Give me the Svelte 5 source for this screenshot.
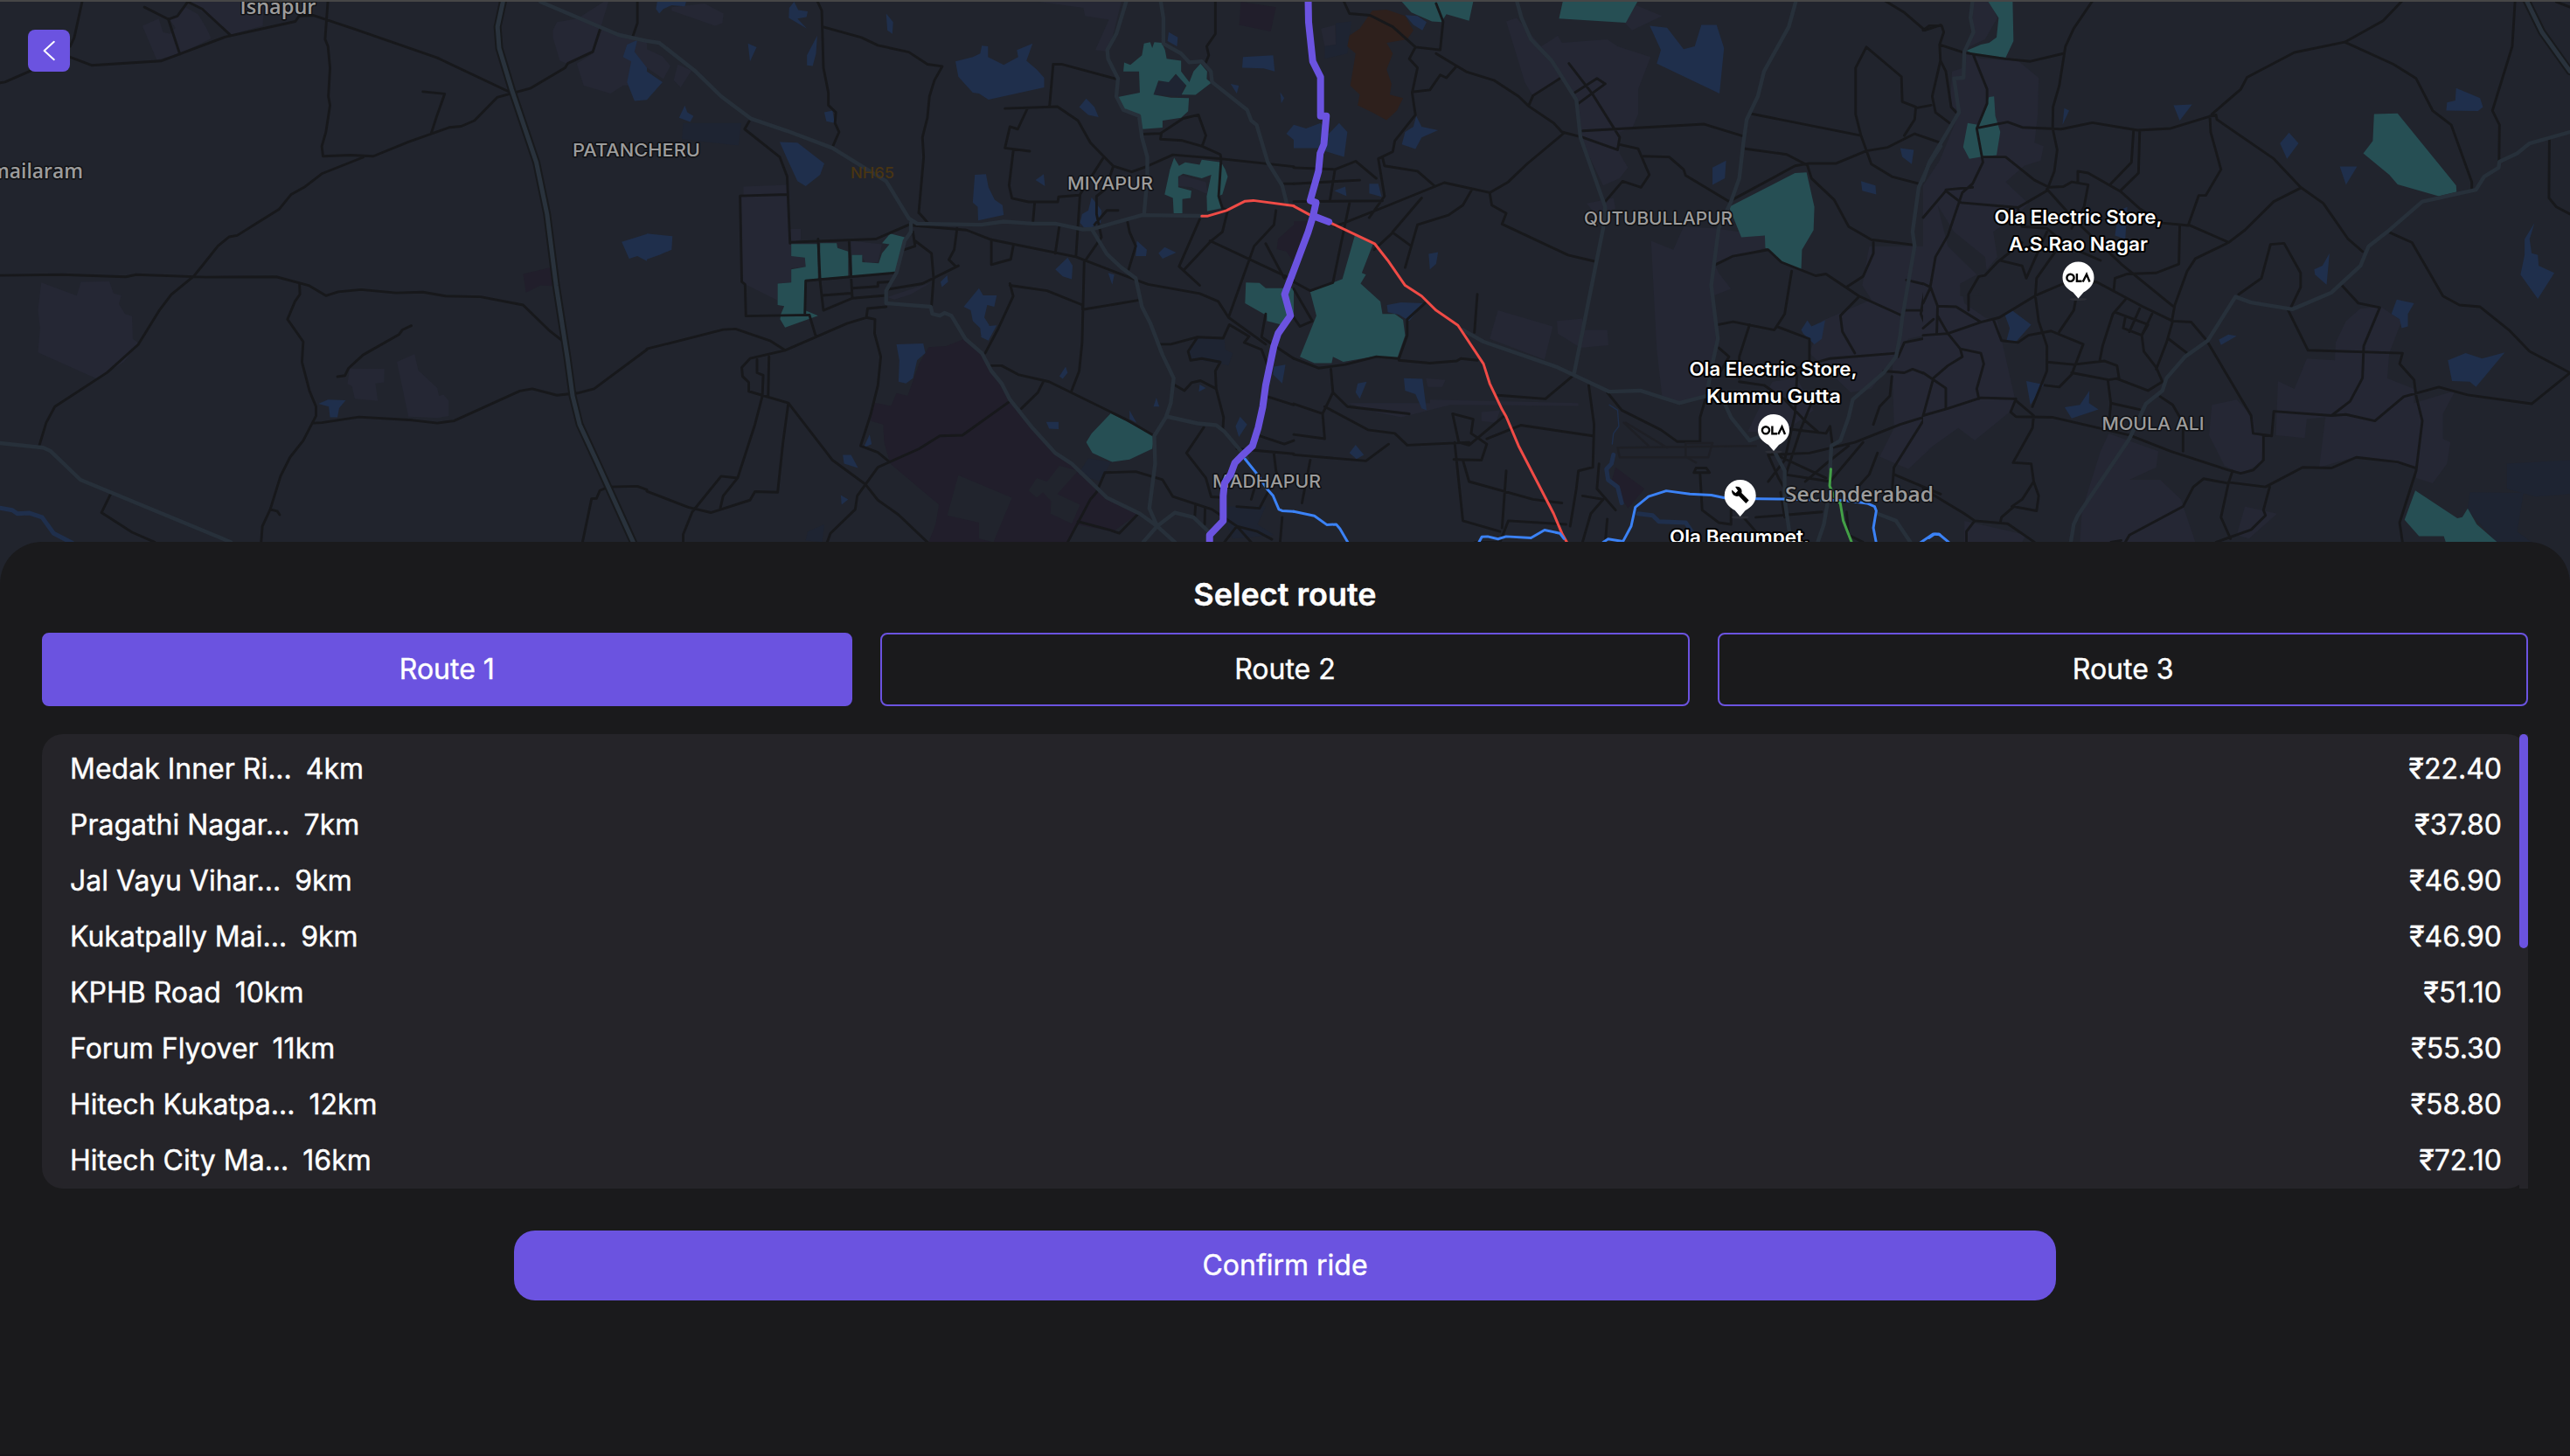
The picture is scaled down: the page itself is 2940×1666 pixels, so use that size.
<script>
  // Map geometry is stored in four tiles; every tile uses a 1568-unit square grid.
  const tiles = [
    {
      x: 0,
      shapes: [
        ['built', 'M345,72 385,52 395,90 412,95 425,78 412,55 450,20 480,40 500,78 512,108 437,150 380,168Z M455,0 640,0 637,72 560,97Z M1340,85 1350,62 1400,52 1470,0 1475,5 1455,80 1437,145 1378,180 1357,170 1340,105Z M1398,178 1437,150 1460,80 1568,110 1568,235 1510,240 1480,262 1415,240Z M100,792 186,829 196,790 265,789 275,822 294,828 288,852 303,880 320,886 322,950 336,962 300,1015 235,1062 92,988 97,920 92,870Z M848,1033 932,1034 931,1072 910,1075 916,1124 860,1118 853,1082 842,1076Z M962,1014 1005,992 1014,1038 1060,1088 1064,1110 1075,1106 1088,1124 1088,1166 1060,1172 990,1168Z'],
        ['campus', 'M1268,768 1335,750 1340,802 1310,800 1275,820Z'],
        ['water', 'M1520,125 1545,112 1538,145 1568,190 1568,280 1538,283 1520,230 1530,172 1510,160Z M1507,678 1568,656 1568,732 1545,718 1525,725Z M772,1132 795,1120 838,1122 822,1144 818,1170 800,1170 797,1140Z']
      ],
      roads: 'M200,0 180,105 170,130 M170,160 222,183 390,171 545,104 716,60 725,45 760,43 860,82 1060,162 1235,258 M0,232 12,230 75,198 M350,20 408,54 430,45 455,5 490,25 560,100 M408,54 436,152 M795,0 788,110 795,130 800,190 796,270 800,295 790,370 780,410 783,438 850,435 905,438 990,398 1090,357 1118,354 1150,338 1205,273 1285,248 1370,190 1376,178 1437,145 1455,80 M1025,257 1078,263 1058,328 1045,375 M880,441 780,487 740,523 705,546 677,586 575,660 555,664 528,690 495,738 470,774 415,826 385,872 335,966 260,1044 133,1140 112,1185 95,1250 M0,772 150,770 305,776 330,770 500,777 670,776 748,800 790,829 820,818 875,812 960,821 1025,819 1080,830 1165,832 1268,855 1330,925 1365,957 1378,978 M726,795 727,825 715,845 697,895 735,958 732,1015 750,1095 766,1140 766,1166 735,1235 703,1282 680,1335 655,1428 636,1475 633,1520 M655,1428 672,1433 678,1443 M818,1056 836,1053 845,1032 880,995 967,938 975,925 997,913 M1568,980 1440,1090 1400,1102 1350,1108 1290,1090 1260,1096 1100,1180 1060,1186 1000,1178 870,1169 780,1185 760,1186 M268,1385 246,1437 320,1492 375,1520 M1568,1373 1545,1363 1475,1365 1454,1375 1446,1397 1434,1398 1412,1520 M1545,0 1545,65 1533,105',
      highways: 'M0,1242 105,1255 122,1264 195,1345 560,1520 M1310,5 1500,98 1568,115',
      expressway: 'M1220,0 1206,75 1210,135 1240,250 1300,455 1326,600 1348,800 1375,1000 1388,1110 1405,1190 1445,1290 1535,1520',
      rivers: 'M0,1424 30,1430 42,1440 70,1438 102,1450 130,1495 175,1522'
    },
    {
      x: 740,
      shapes: [
        ['built', 'M60,20 140,10 186,38 183,65 165,72 60,30Z M0,138 38,158 57,185 40,222 0,190Z M75,180 108,198 82,245 65,225Z M234,523 340,518 342,545 234,548Z M228,548 342,545 347,642 373,642 373,672 347,682 385,720 385,748 350,752 350,792 317,795 317,842 232,793Z M950,5 1150,5 1120,145 1087,140 1120,55 1062,45 1058,22Z M1290,490 1355,510 1360,545 1320,525 1288,522Z M582,833 690,792 640,825 600,840Z M495,675 570,685 560,735 530,738 520,715 495,715Z'],
        ['campus', 'M683,973 725,970 770,950 812,990 835,1040 880,1125 905,1160 988,1270 1030,1300 1110,1390 1190,1440 1130,1490 1040,1470 1020,1520 683,1520 700,1470 708,1415 590,1300 575,1240 573,1190 543,1180 548,1128 592,1138 605,1102 632,1110 660,1020Z M1440,5 1525,20 1512,88 1436,70Z M1568,630 1568,735 1550,705 1527,698 1530,670Z'],
        ['clear', 'M755,1332 885,1395 840,1520 805,1510 805,1465 728,1445Z M925,1375 945,1340 970,1350 1000,1305 1045,1320 995,1385 1050,1415 1030,1468 978,1440 980,1405 960,1380 945,1395Z'],
        ['shade', 'M88,345 229,345 222,408 85,390Z M1315,970 1340,945 1400,950 1402,980 1420,990 1410,1025 1370,1015 1315,1005Z M1070,1285 1125,1295 1100,1350 1045,1330Z M390,1490 430,1470 425,1520 385,1515Z M1225,240 1290,210 1305,235 1295,270 1228,265Z M1390,1420 1500,1420 1480,1470 1520,1500 1420,1510Z'],
        ['water', 'M25,5 95,5 92,18 60,15 40,25 30,38 22,25Z M357,5 367,28 390,32 387,48 365,52 388,80 344,50 345,22Z M580,38 597,62 595,95 583,85Z M245,122 266,132 250,172Z M413,100 410,150 402,185 388,183 388,155Z M0,200 38,230 0,280Z M92,296 98,315 113,325 105,342 78,330Z M430,315 450,310 455,345 435,340Z M322,398 365,400 430,458 420,490 385,522 365,508 340,445Z M748,172 790,160 808,150 812,128 827,130 827,160 865,182 900,160 897,140 935,122 920,170 945,195 963,218 963,245 828,279 805,262 790,260 755,215Z M1048,300 1065,276 1085,300 1095,328 1070,322Z M795,490 822,488 828,525 843,560 862,575 865,603 803,618 802,580 790,568Z M942,505 962,488 965,522Z M1078,553 1102,590 1100,625 1065,645 1050,625 1055,600 1070,590Z M1020,722 1032,745 1030,783 1008,775 990,755Z M1188,675 1212,700 1210,718 1185,718Z M1240,710 1255,693 1283,708 1250,725Z M1118,765 1133,770 1128,798Z M0,655 62,662 60,700 30,715 0,727Z M805,808 815,828 848,828 842,860 825,855 818,890 830,912 810,940 808,920 790,900 785,870 768,860Z M728,772 730,790 715,805 712,790Z M815,915 848,912 828,955 810,945Z M605,965 670,963 675,990 655,1010 645,1060 628,1075 610,1070 612,1010Z M1015,1028 1020,1045 1008,1062 1000,1055Z M968,1183 998,1183 998,1203 975,1202Z M540,1218 545,1245 525,1255Z M475,1275 495,1275 512,1312 478,1300Z M470,1388 488,1400 472,1415Z M1170,1150 1187,1185 1170,1175Z M1235,1115 1242,1140 1228,1140Z M1438,1168 1455,1190 1435,1225 1427,1195Z M1340,1078 1355,1088 1338,1098Z M1445,160 1518,155 1522,200 1495,192 1443,190Z M1265,90 1287,105 1285,130 1262,115Z M1415,235 1435,240 1430,262Z M1535,258 1545,275 1538,290Z M1550,375 1568,350 1568,392Z M1520,1028 1548,1022 1540,1075 1518,1050Z'],
        ['green', 'M1205,122 1220,118 1225,135 1230,118 1248,120 1256,140 1260,165 1295,170 1295,200 1315,230 1325,200 1342,178 1358,200 1357,222 1368,232 1330,266 1296,265 1308,240 1282,207 1265,230 1240,226 1228,265 1270,274 1314,275 1312,312 1295,330 1250,338 1250,358 1202,362 1192,325 1158,308 1142,272 1195,260 1193,200 1155,200 1157,175 1172,182 1200,155Z M1278,442 1290,465 1305,455 1340,462 1345,448 1392,455 1402,475 1408,495 1395,545 1385,550 1395,583 1358,592 1357,550 1368,490 1345,500 1300,487 1288,495 1288,525 1320,535 1318,555 1298,558 1298,598 1277,598 1275,555 1255,545 1268,475Z M350,684 413,684 415,781 385,788 383,870 415,885 335,918 323,895 325,880 333,858 317,855 317,795 350,792 350,755 385,748 383,722 350,718Z M420,682 460,682 462,695 488,705 488,775 420,781Z M497,715 522,715 522,735 562,738 570,710 588,685 570,682 590,655 625,665 605,765 497,775Z M1125,1158 1230,1222 1225,1258 1170,1288 1128,1295 1080,1270 1065,1240 1078,1215Z M1452,792 1485,793 1500,808 1568,808 1568,880 1538,910 1503,900 1503,885 1450,850Z']
      ],
      roads: 'M412,0 424,30 428,190 440,260 440,295 458,315 456,345 466,370 450,412 M426,75 520,105 560,127 635,146 680,180 716,186 697,225 685,270 680,330 668,385 671,440 659,597 M1140,222 1005,180 985,180 976,298 M868,304 995,299 1045,338 1075,400 1130,465 1175,482 1215,465 1275,434 1390,445 1568,467 M922,305 899,362 880,355 868,415 928,424 M888,424 878,520 885,556 925,566 996,566 998,552 1048,547 M1105,445 1050,545 1040,720 M1130,468 1112,530 1090,550 1090,600 M940,568 936,620 M1000,632 990,710 M1378,0 1378,95 1357,130 1362,155 1355,175 M1202,376 1245,374 1300,332 1337,322 1355,380 1346,410 1390,433 1392,445 1386,550 1395,583 1408,590 1395,650 1368,675 1303,755 M1346,410 1298,394 1245,390 1247,374 M645,632 775,645 835,672 1040,720 1190,787 1215,797 1340,823 1385,845 1410,890 1500,965 M835,672 835,742 882,727 888,690 M752,640 745,700 732,728 748,746 M660,597 683,627 M645,650 650,690 625,700 M650,675 690,710 695,780 690,858 M645,625 555,670 348,679 M248,340 237,362 322,440 340,495 347,682 M340,545 226,549 230,790 238,797 240,886 394,883 410,945 M415,670 420,790 428,870 498,836 580,828 M383,878 385,787 600,765 M490,675 498,836 M425,828 495,822 M498,808 560,803 560,792 588,790 M580,812 668,795 755,745 M0,978 185,924 215,922 300,956 335,982 485,907 532,890 553,895 552,935 567,1000 560,1080 543,1160 518,1250 560,1268 585,1292 M532,890 535,865 580,860 M335,982 250,1005 230,1030 232,1055 247,1072 247,1097 343,1130 450,1290 530,1358 560,1402 610,1443 680,1520 M267,1008 267,1045 282,1052 280,1110 262,1190 220,1340 180,1335 110,1435 88,1498 88,1520 M296,1000 294,1110 M343,1130 330,1240 317,1380 262,1378 250,1402 155,1437 100,1422 0,1377 M220,1340 185,1390 178,1425 M880,1125 765,1220 710,1222 660,1258 560,1310 510,1390 505,1428 445,1495 437,1520 M880,800 970,815 1056,855 1056,868 1190,842 M880,795 888,830 850,925 820,990 M1090,600 1102,665 1060,735 1055,960 1048,1040 1028,1100 M835,1025 860,1025 900,1050 975,1070 1160,1175 1230,1222 M960,1072 948,1100 908,1145 M1165,622 1170,650 1185,690 1168,755 M1142,590 1115,590 1085,630 M1340,615 1290,747 1340,800 M1365,675 1568,785 M1500,683 1545,780 M1525,590 1520,630 1472,690 1410,890 M1245,965 1270,965 1335,945 1397,948 1412,910 1460,943 1448,960 1490,980 M1500,880 1490,945 1568,1005 M1335,945 1312,985 1318,1010 1345,1005 1390,1015 1378,1040 1380,1090 1398,1170 1396,1205 M1280,1080 1303,1095 1320,1073 1342,1067 1380,1090 M1490,980 1510,1040 1500,1110 1568,1135 M1350,1198 1308,1270 1355,1340 1368,1393 1400,1395 M1480,1220 1545,1245 1568,1235 M1430,1258 1568,1272 M1520,1272 1525,1320 1540,1370 M1020,1520 1075,1400 1090,1380 1110,1325 1185,1322 1250,1345 1275,1392 1370,1428 1430,1475 1465,1520 M1045,1462 1120,1485 1145,1495 1190,1442 M1330,1415 1328,1450 M1353,1425 1352,1470 M1430,1420 1485,1425 1510,1370 M1465,1400 1475,1360 M1400,1520 1430,1475 1480,1490 1515,1512 M1535,1520 1540,1450 M1545,515 1568,515',
      highways: 'M0,115 30,120 115,197 180,270 253,333 340,367 450,415 580,508 635,612 655,627 810,630 865,621 935,627 990,627 1055,643 1080,642 1200,603 1345,605 M640,625 640,650 625,675 605,765 580,815 580,850 688,860 692,880 710,885 722,877 738,885 772,950 812,990 835,1040 860,1075 880,1120 935,1200 990,1270 1030,1300 1115,1395 1195,1440 1240,1478 1280,1520 M1163,0 1138,95 1116,140 1118,165 1142,220 1138,270 1155,308 1193,325 1200,385 1213,440 1213,500 1205,603 M1245,0 1252,50 1252,122 1295,150 1315,175 1345,172 1367,200 1370,230 1455,308 1465,338 1478,350 1505,455 1540,520 1552,575 M1080,645 1115,712 1150,750 1185,780 1200,860 1220,905 1250,995 1277,1060 1270,1130 1258,1170 1230,1222 1232,1300 1218,1425 1237,1475 1203,1520 M1262,1168 1335,1187 1380,1192 1400,1210 1455,1285 M1237,1475 1280,1437 1325,1450 1370,1500',
      expressway: '',
      rivers: ''
    },
    {
      x: 1480,
      shapes: [
        ['built', 'M515,60 540,50 600,130 640,100 650,120 760,110 785,130 865,160 835,250 835,320 820,360 790,370 790,430 810,470 790,500 750,520 700,400 690,280 650,220 580,270 560,230Z M830,15 893,45 820,85 800,62Z M66,80 100,70 102,125 75,130Z M495,870 628,915 608,1008 475,950Z M638,900 700,893 702,925 760,925 763,968 695,975 640,935Z M866,675 920,700 945,635 1020,640 1145,660 1143,695 1020,740 1030,765 1060,810 1015,830 1025,970 1000,1110 940,1128 893,1115 880,980Z M710,570 775,555 780,585 730,600Z M1395,690 1568,690 1568,930 1490,950 1400,1090 1350,1100 1250,990 1280,900 1400,840 1378,800Z M1450,970 1568,940 1568,1230 1490,1315 1420,1280 1455,1200Z M1325,900 1365,870 1420,860 1410,895 1370,905Z M330,1120 690,1130 690,1138 380,1135 260,1170 200,1155 130,1130 330,1130Z M455,1155 500,1150 490,1185 455,1180Z M320,1060 368,1065 360,1085 325,1085Z M1160,1070 1220,1060 1260,1150 1190,1210 1100,1210Z'],
        ['campus', 'M0,620 45,620 0,735Z M780,1310 850,1370 810,1425 770,1350Z'],
        ['shade', 'M102,65 140,60 130,150 75,165 75,130 102,125Z'],
        ['brown', 'M190,30 225,27 270,45 290,85 275,110 225,120 240,150 225,195 237,235 233,265 265,275 250,310 225,337 190,315 155,295 160,265 137,240 150,150 130,130 135,100 160,80Z'],
        ['water', 'M270,42 300,45 322,62 312,85 290,70Z M0,350 30,360 65,345 85,375 110,345 130,370 122,440 80,425 65,415 0,415Z M297,325 310,355 350,365 310,385 295,418 262,405 270,370 290,355Z M98,535 125,523 128,550Z M183,515 205,515 213,552 183,542Z M327,712 350,707 345,740 330,755Z M226,855 260,848 315,850 280,900 255,882 228,875Z M863,72 905,78 945,138 972,130 988,70 1025,70 1043,135 1032,262 880,178 890,140Z M1015,470 1048,450 1045,500 1015,518Z M1470,415 1503,420 1498,460 1475,440Z M1375,508 1410,520 1412,545 1378,535Z M1230,925 1245,898 1255,915 1288,898 1280,950 1262,965 1235,935Z M155,1075 177,1070 160,1118 150,1100Z M267,1060 312,1062 322,1150 310,1145 295,1105 270,1095Z M150,1247 170,1275 152,1287 135,1270Z'],
        ['green', 'M262,5 435,5 425,58 370,40 358,62 335,60 285,35Z M652,5 833,5 805,64 643,52Z M1055,580 1215,485 1243,483 1262,580 1260,645 1232,700 1230,757 1182,735 1150,697 1143,695 1142,660 1085,665Z M148,660 192,685 165,765 175,770 162,795 210,845 215,880 245,880 265,897 270,940 250,1007 190,1000 120,1014 95,1000 92,1018 50,1018 15,1000 55,885 40,818 118,782Z']
      ],
      roads: 'M120,0 135,38 185,43 240,75 295,132 355,140 362,60 345,10 M295,132 280,165 300,190 287,260 295,322 245,395 240,425 205,445 220,550 183,610 M215,440 220,465 300,480 340,520 M287,258 330,252 355,210 370,218 395,185 M345,150 395,185 420,202 485,225 545,270 570,298 630,345 650,370 700,385 785,420 790,385 725,265 667,178 M570,295 580,268 645,220 M678,262 735,220 755,235 690,290 M700,367 995,348 1090,382 M790,405 835,417 862,490 842,525 797,508 755,565 M848,438 910,440 945,475 950,492 1055,565 1215,465 1250,458 1315,458 1388,423 1440,413 1505,375 1568,400 M1105,318 1375,380 M1095,417 1195,433 1245,463 1255,500 1310,560 1345,635 1400,672 1505,687 M1375,380 1362,320 1362,190 1388,132 1473,215 1475,285 1508,300 1505,335 1480,380 M1375,380 1400,460 1450,495 1515,515 M1430,0 1480,35 1530,85 1568,70 M1508,303 1545,295 M655,373 565,460 520,510 475,540 365,512 220,580 100,635 M475,540 480,575 515,598 505,628 665,715 727,732 M430,535 410,575 375,603 300,630 270,750 285,690 240,652 195,700 M310,555 240,650 M0,470 100,475 150,452 200,500 M100,475 88,560 M0,515 160,505 M0,565 215,563 M135,570 95,792 40,815 0,790 M0,810 45,900 15,915 0,890 M445,825 438,932 M318,850 275,895 275,940 255,1005 200,1000 125,1022 60,1032 0,1005 M255,1010 330,1018 395,1012 405,1005 445,1010 M90,1035 95,1100 70,1160 0,1132 M95,1100 130,1140 280,1160 M75,1140 180,1205 245,1215 275,1248 425,1240 M70,1160 75,1230 0,1218 M230,1245 175,1292 0,1275 M40,1290 20,1410 M675,1055 610,1118 495,1108 M508,1168 425,1248 400,1240 385,1160 435,1175 430,1215 468,1245 455,1290 388,1288 M390,1240 410,1460 500,1490 M410,1290 425,1350 580,1400 650,1410 M515,1320 505,1480 M468,1230 550,1192 725,1222 M715,1080 728,1190 725,1310 690,1320 685,1370 670,1475 M760,1100 795,1150 890,1205 930,1238 985,1238 985,1170 1000,1110 M740,1300 735,1370 780,1430 M700,1390 750,1400 720,1440 700,1520 M760,1455 755,1520 M440,1520 500,1520 520,1460 660,1470 M1022,742 1065,718 1150,700 1182,735 1265,773 1290,768 1370,830 1475,885 M1340,805 1380,775 1405,710 1405,680 M1370,832 1325,885 1330,930 1360,990 M1207,760 1190,880 1165,925 1065,902 1030,910 M1105,910 1080,1000 1080,1060 M1170,915 1250,950 1250,1010 M1210,1035 1300,1005 1460,990 M1485,785 1540,800 1568,830 M1480,870 1525,870 M1530,810 1520,880 1540,935 1568,940 M1550,820 1560,880 M1568,940 1480,960 1465,1000 M1430,1040 1480,1045 1500,1035 1568,1065 M1450,1055 1445,1110 1420,1140 1405,1190 M1030,975 1055,1000 1030,1050 M1080,1070 1140,1080 1190,1120 1240,1180 1270,1210 M1220,1050 1215,1160 1190,1290 1150,1350 M1265,1100 1230,1200 1190,1340 M1180,1200 1290,1215 1300,1195 1305,1240 M1150,1275 1250,1270 1360,1240 1470,1190 1568,1155 M1150,1275 1175,1340 1200,1390 M1160,1270 1290,1340 M1190,1330 1300,1350 1380,1240 M1240,1350 1290,1300 1345,1250 M1568,1100 1520,1190 1455,1310 1450,1380 M1455,1330 1568,1385 M1415,1270 1395,1330 1340,1400 M985,1330 990,1430 1030,1465 1060,1470 1060,1430 M970,1325 1008,1325 1000,1312 975,1312Z M1090,1450 1120,1490 1140,1520 M1120,1450 1180,1445 1280,1435 M1190,1450 1180,1380 M1340,1435 1345,1500 1380,1520',
      faint: 'M785,1255 1120,1250 M785,1255 790,1282 1005,1282 1015,1242 950,1242 950,1280 975,1297 M805,1185 905,1255 M800,1185 860,1250',
      highways: 'M540,0 552,50 575,110 625,170 685,280 695,385 755,580 750,640 680,1045 M1218,0 1200,75 1140,200 1125,270 1098,335 1090,400 1080,500 1060,565 1030,640 1012,800 1028,950 1012,1035 1005,1080 M410,925 460,958 640,1030 765,1098 840,1095 935,1130 1000,1110 M1040,1120 1060,1170 1105,1235 1150,1215 M1568,410 1540,460 1515,525 1500,650 1505,690 1475,890 1470,940 1460,1000 1430,1045 1355,1120 1345,1170 1325,1235 1303,1250 1300,1315 M1165,1265 1190,1320 1190,1400 1205,1520 M1300,1370 1285,1470 1270,1520 M1415,1440 1460,1460 1495,1520',
      expressway: '',
      rivers: 'M775,1275 770,1300 758,1315 762,1345 785,1365 795,1410 M835,1440 870,1445 885,1462 950,1465 970,1500',
      creek: 'M765,1135 785,1150 788,1195 775,1215 772,1245'
    },
    {
      x: 2200,
      shapes: [
        ['built', 'M120,0 160,0 180,50 150,110 105,135 120,85Z M100,145 140,165 230,170 280,218 278,320 270,400 292,410 285,450 245,465 200,510 255,570 230,600 170,650 180,720 130,790 90,800 100,850 150,890 180,900 222,1115 215,1150 125,1235 85,1200 0,1270 0,520 40,450 90,310 65,300 70,200 98,190Z M430,1265 450,1215 570,1265 565,1310 500,1345 575,1345 625,1400 660,1520 380,1520 385,1430Z M693,1220 700,1135 760,1120 800,1170 805,1210 825,1225 820,1300 770,1327 730,1305Z M860,1068 900,1090 930,1005 998,1010 1000,960 1025,900 1060,865 1110,860 1160,900 1130,990 1125,1060 1190,1090 1190,1130 1290,1095 1260,1160 1260,1230 1278,1240 1270,1300 1235,1355 1195,1340 1195,1310 1050,1280 960,1310 975,1170 930,1175 925,1228 855,1220Z M780,1420 858,1440 790,1510 760,1500Z M100,1460 250,1500 240,1520 100,1520Z'],
        ['clear', 'M35,575 75,650 150,720 155,770 120,800 140,830 90,830 90,795 130,770 60,690Z'],
        ['shade', 'M1415,1300 1568,1290 1568,1385 1485,1392 1415,1370Z M1325,1380 1455,1382 1440,1490 1475,1520 1390,1520 1320,1430Z'],
        ['water', 'M342,303 354,310 338,350Z M607,295 652,293 622,338Z M865,402 887,372 910,402 882,445Z M1010,467 1052,467 1025,518Z M1292,247 1350,275 1357,300 1345,311 1268,310 1270,287 1290,282Z M460,580 475,590 495,580 490,670 465,660 470,620Z M198,882 215,870 262,910 225,958 202,955 210,920Z M250,1068 292,1078 260,1135Z M343,1142 380,1135 403,1095 402,1130 425,1148 360,1173Z M948,755 968,745 985,710 978,798 950,770Z M1482,625 1470,670 1475,710 1490,715 1492,745 1530,765 1490,838 1448,770 1458,715 1458,670Z M1148,840 1190,850 1175,880 1175,915 1160,920 1155,895 1135,880Z M1272,1010 1315,990 1355,1005 1410,988 1340,1085 1325,1070 1282,1068Z M717,952 740,938 760,942 722,967Z'],
        ['green', 'M158,5 217,5 219,115 200,162 125,152 105,142 140,125 160,120 178,105 183,50Z M160,272 172,270 175,325 187,370 178,435 140,440 112,445 97,412 108,345 132,350Z M1093,320 1150,318 1292,520 1293,538 1250,550 1150,517 1130,490 1067,430 1090,395Z M1193,1375 1295,1453 1307,1450 1320,1425 1342,1470 1392,1520 1267,1520 1262,1503 1202,1503 1167,1457Z']
      ],
      roads: 'M412,0 365,80 345,130 330,240 315,300 314,360 325,420 318,480 303,525 M40,125 100,148 200,165 260,172 340,150 M0,85 15,72 45,72 50,90 40,125 42,170 22,270 30,315 70,350 M42,170 55,200 68,300 80,315 M122,155 155,250 155,290 130,360 145,455 120,515 95,540 60,660 30,720 18,800 M135,358 205,342 240,357 335,362 410,344 520,365 600,360 690,328 710,322 712,335 850,445 915,525 970,570 1030,670 1065,705 M700,320 770,250 785,217 900,147 1022,118 1115,58 1163,0 M1022,118 1140,180 1195,220 1235,310 1280,350 1330,510 1330,530 M695,325 697,370 722,475 685,548 668,548 643,630 738,678 M915,527 850,565 780,645 740,680 660,725 640,760 610,855 603,900 M1435,0 1428,130 1380,310 1397,350 1396,455 M1535,5 1568,20 M1518,390 1517,555 1535,580 1568,600 M1128,650 1185,680 1260,830 1300,855 1350,860 1420,925 1470,985 1568,1045 1475,1132 1320,1107 1250,1085 1165,1112 1095,1180 1025,1162 990,1165 850,1153 845,1222 800,1215 795,1165 690,960 M1015,800 1055,850 1107,862 1068,970 1065,1060 1035,1125 990,1165 M885,870 933,982 1162,990 1155,1020 1190,1065 1195,1110 1210,1180 1195,1320 1155,1465 1162,1520 M765,825 820,780 842,685 875,682 915,765 915,805 890,865 M145,440 200,440 270,505 305,525 340,523 360,510 400,518 390,580 M375,510 375,480 400,485 480,538 525,585 M510,367 505,455 455,515 M525,367 522,485 478,535 M55,532 120,525 M0,610 55,535 92,568 230,582 300,535 M240,635 230,585 M240,635 300,640 350,690 430,730 M300,530 370,620 480,740 605,858 M360,640 390,580 M525,585 580,625 643,632 M622,632 620,740 565,765 495,768 465,780 462,815 M330,690 275,780 272,830 280,900 300,970 300,1040 265,1140 M185,730 240,745 250,780 300,650 M240,680 180,735 150,772 135,775 110,825 110,870 M0,795 18,805 35,858 80,860 140,903 185,890 275,827 340,795 420,790 530,858 605,900 650,903 690,958 M0,940 60,935 140,903 M18,805 0,850 M35,858 33,935 M0,920 25,895 M35,885 60,935 90,978 140,990 147,1020 130,1090 135,1118 M90,978 95,1000 60,1025 25,1060 0,1165 M0,1045 55,1088 55,1145 M0,1165 60,1145 140,1115 225,1118 M170,895 190,955 230,960 255,940 310,928 388,965 360,1050 330,1085 295,1080 M370,840 365,870 330,930 M490,840 460,880 435,970 428,1012 M465,875 545,910 530,940 485,920 490,890 M525,865 500,930 M555,880 530,940 535,985 565,1030 580,1070 M605,900 590,960 565,1035 M595,950 640,990 M300,1015 365,1022 440,1012 470,1025 475,1060 450,1065 360,1045 M470,1062 545,1095 580,1070 M448,1068 455,1130 525,1148 M455,1130 450,1195 M575,1112 605,1135 630,1185 630,1265 M225,1118 212,1155 225,1168 315,1170 500,1220 600,1265 740,1318 770,1327 800,1318 825,1290 825,1220 M220,1118 268,1165 265,1200 218,1297 262,1300 268,1350 280,1390 275,1432 220,1420 190,1450 187,1465 M268,1350 240,1400 215,1420 M0,1370 100,1440 125,1460 205,1468 270,1520 M125,1460 105,1490 105,1520 M750,1320 740,1355 680,1342 655,1365 630,1420 500,1500 490,1520 M740,1352 830,1365 920,1310 990,1312 1050,1282 1150,1295 1195,1312 M740,1355 722,1450 745,1510 M840,1365 825,1430 830,1445 795,1485 710,1520 M455,1520 480,1515',
      faint: '',
      highways: 'M120,0 115,50 122,90 100,145 98,218 75,220 87,315 15,455 0,505 M1568,370 1470,402 1440,430 1397,453 1395,470 1360,495 1340,532 1210,565 1125,650 1080,690 1060,745 990,820 895,867 795,848 757,832 690,955 635,1000 590,1060 580,1095 540,1132 500,1230 375,1445 365,1470 358,1520',
      expressway: 'M1462,0 1500,90 1568,200',
      rivers: ''
    }
  ];

  const transit = [
    { x: 740, kind: 'red', d: 'M1345,606 1358,606 1405,590 1450,564 1470,562 1568,577' },
    { x: 740, kind: 'blue', d: 'M1450,1287 1480,1330 1503,1370 1518,1390 1532,1428 1540,1432 1568,1434' },
    { x: 1480, kind: 'red', d: 'M0,578 45,606 90,625 196,683 228,730 270,800 310,830 345,870 398,912 460,1020 475,1075 505,1148 515,1168 545,1250 630,1440 650,1495 663,1522' },
    { x: 1480, kind: 'blue', d: 'M0,1434 50,1446 80,1471 103,1470 112,1482 132,1522 M448,1522 456,1505 470,1504 495,1511 515,1504 575,1508 608,1486 645,1495 655,1510 M750,1520 762,1511 798,1518 818,1475 828,1422 860,1392 903,1376 960,1385 1012,1388 1050,1397 1185,1399 1340,1403 1390,1411 1408,1420 1412,1432 1405,1480 1412,1522 M1518,1522 1550,1497 1566,1499' },
    { x: 1480, kind: 'green-line', d: 'M1302,1315 1299,1362 1310,1392 1325,1412 1332,1460 1353,1522' },
    { x: 2200, kind: 'blue', d: 'M14,1508 28,1497 38,1497 62,1520' }
  ];

  const route = [
    { x: 1480, d: 'M35,0 36,62 46,172 65,216 65,325 79,325 73,405 64,430 60,480 40,562 54,568 47,605 85,622 M47,605 35,650 -4,770 -22,825 -8,885 -38,935 -48,970 -68,1080 -75,1140 -86,1198 -100,1250 -128,1280 -143,1298 -153,1330 -168,1355 -171,1390 -171,1460 -204,1500 -204,1525' }
  ];

  const places = [
    { text: 'Isnapur', x: 318, y: 16, w: 87, size: 24, kind: 'town' },
    { text: 'mailaram', x: 42, y: 204, w: 106, size: 24, kind: 'town' },
    { text: 'PATANCHERU', x: 728, y: 179, w: 146, size: 20, kind: 'area' },
    { text: 'NH65', x: 998, y: 204, w: 50, size: 17, kind: 'road' },
    { text: 'MIYAPUR', x: 1270, y: 217, w: 98, size: 20, kind: 'area' },
    { text: 'MADHAPUR', x: 1449, y: 558, w: 124, size: 20, kind: 'area' },
    { text: 'QUTUBULLAPUR', x: 1897, y: 257, w: 170, size: 20, kind: 'area' },
    { text: 'MOULA ALI', x: 2463, y: 492, w: 117, size: 20, kind: 'area' },
    { text: 'Secunderabad', x: 2127, y: 573.5, w: 170, size: 24, kind: 'town' },
    { text: 'Ola Electric Store,', x: 2028.5, y: 429.5, w: 192, size: 22, kind: 'store' },
    { text: 'Kummu Gutta', x: 2029, y: 461, w: 154, size: 22, kind: 'store' },
    { text: 'Ola Electric Store,', x: 2377.5, y: 255.5, w: 192, size: 22, kind: 'store' },
    { text: 'A.S.Rao Nagar', x: 2377.5, y: 287, w: 159, size: 22, kind: 'store' },
    { text: 'Ola Begumpet,', x: 1990, y: 622, w: 160, size: 22, kind: 'store' }
  ];

  const pins = [
    { x: 2029, y: 492, type: 'ola' },
    { x: 2377.5, y: 317.5, type: 'ola' },
    { x: 1990.7, y: 567, type: 'service' }
  ];

  const routes = ['Route 1', 'Route 2', 'Route 3'];
  let selected = $state(0);

  const stops = [
    { name: 'Medak Inner Ri...', km: 4, fare: '22.40' },
    { name: 'Pragathi Nagar...', km: 7, fare: '37.80' },
    { name: 'Jal Vayu Vihar...', km: 9, fare: '46.90' },
    { name: 'Kukatpally Mai...', km: 9, fare: '46.90' },
    { name: 'KPHB Road', km: 10, fare: '51.10' },
    { name: 'Forum Flyover', km: 11, fare: '55.30' },
    { name: 'Hitech Kukatpa...', km: 12, fare: '58.80' },
    { name: 'Hitech City Ma...', km: 16, fare: '72.10' }
  ];

  const tileTransform = (x) => `translate(${x} 0) scale(0.471939 0.408163)`;
</script>

<main class="screen">
  <section class="map">
    <svg class="canvas" viewBox="0 0 2940 700" aria-label="Map">
      {#each tiles as tile}
        <g transform={tileTransform(tile.x)}>
          {#each tile.shapes as [kind, d]}
            <path class={kind} {d} />
          {/each}
          <path class="river" d={tile.rivers} />
          {#if tile.creek}<path class="creek" d={tile.creek} />{/if}
          <path class="minor" d={tile.roads} />
          {#if tile.faint}<path class="faint" d={tile.faint} />{/if}
        </g>
      {/each}
      {#each tiles as tile}
        <g transform={tileTransform(tile.x)}>
          <path class="highway" d={tile.highways} />
          <path class="express-casing" d={tile.expressway} />
          <path class="express" d={tile.expressway} />
        </g>
      {/each}
      {#each transit as line}
        <path class="transit {line.kind}" transform={tileTransform(line.x)} d={line.d} />
      {/each}
      {#each places as p}
        <text class="label {p.kind}" x={p.x} y={p.y} font-size={p.size} textLength={p.w} lengthAdjust="spacingAndGlyphs" text-anchor="middle">{p.text}</text>
      {/each}
      {#each route as line}
        <path class="route-line" transform={tileTransform(line.x)} d={line.d} />
      {/each}
      {#each pins as pin}
        <g transform="translate({pin.x} {pin.y})">
          <ellipse class="pin-shadow" cx="0" cy="25" rx="10" ry="1.6" />
          <path class="pin" d="M-18 0A18 18 0 1 1 18 0C18 8 13 13 6 17L0 24L-6 17C-13 13 -18 8 -18 0Z" />
          {#if pin.type === 'ola'}
            <circle class="mark" cx="-9" cy="0.3" r="4.1" />
            <path class="mark" d="M-1.6 -4.6V4.2H4M5.2 5L9.5 -3.6L13 5" />
          {:else}
            <path class="wrench" d="M-9.5 -6.5L-5.2 -2.8L-2.6 -5.4L-5.6 -10C-1 -11.5 3 -7.5 1.6 -3L10 5.4L6.6 9L-1.6 0.6C-6 2 -10.3 -1.6 -9.5 -6.5Z" />
          {/if}
        </g>
      {/each}
    </svg>
    <button class="back" aria-label="Back">
      <svg viewBox="0 0 48 48"><path d="M29.8 13.8L18.6 24L29.8 34.2" /></svg>
    </button>
  </section>

  <section class="sheet">
    <h1>Select route</h1>
    <div class="tabs">
      {#each routes as name, i}
        <button class="tab" class:active={selected === i} onclick={() => (selected = i)}>{name}</button>
      {/each}
    </div>
    <div class="list">
      <ul class="stops">
        {#each stops as stop}
          <li><span class="stop">{stop.name}</span><span class="km">{stop.km}km</span><span class="fare">₹{stop.fare}</span></li>
        {/each}
      </ul>
      <div class="track"><div class="thumb"></div></div>
    </div>
    <button class="confirm">Confirm ride</button>
  </section>
</main>

<style>
  :global(body) { background: #1a1a1c; }
  .screen {
    display: flex;
    flex-direction: column;
    width: 2940px;
    height: 1666px;
    overflow: hidden;
    background: #1a1a1c;
    color: #fff;
    font-family: Inter, "Liberation Sans", sans-serif;
  }
  button { font: inherit; color: inherit; border: 0; padding: 0; }
  .map {
    position: relative;
    box-sizing: border-box;
    height: 700px;
    flex: none;
    margin-bottom: -80px;
    overflow: hidden;
    background: #21242d;
  }
  .map::after {
    content: "";
    position: absolute;
    inset: 0 0 auto;
    height: 2px;
    background: #464646;
  }
  .canvas { display: block; width: 2940px; height: 700px; }
  .canvas path { vector-effect: non-scaling-stroke; }
  .built { fill: #252734; }
  .campus { fill: #211e2b; }
  .clear { fill: #21242d; }
  .shade { fill: #1e2432; }
  .brown { fill: #2e201c; }
  .water { fill: #1f2f4c; }
  .green { fill: #264f54; }
  .river, .creek, .minor, .faint, .highway, .express, .express-casing, .transit, .route-line {
    fill: none;
    stroke-linejoin: round;
    stroke-linecap: round;
  }
  .river { stroke: #1f2f4c; stroke-width: 5; }
  .creek { stroke: #1f2f4c; stroke-width: 1.4; }
  .minor { stroke: #17181b; stroke-width: 2.9; }
  .faint { stroke: #1e1f25; stroke-width: 2.4; }
  .highway { stroke: #27303a; stroke-width: 4.4; }
  .express-casing { stroke: #181a1d; stroke-width: 9; }
  .express { stroke: #29323c; stroke-width: 5; }
  .transit { stroke-width: 3; }
  .red { stroke: #f04b46; }
  .blue { stroke: #3b82f6; }
  .green-line { stroke: #43a047; }
  .route-line { stroke: #6b53e0; stroke-width: 8; }
  .label {
    font-family: "Noto Sans", "Open Sans", sans-serif;
    font-weight: 500;
    fill: #9c9c9c;
    stroke: #101114;
    stroke-width: 3;
    stroke-linejoin: round;
    paint-order: stroke;
  }
  .town { font-family: "Open Sans", "Noto Sans", sans-serif; font-weight: 600; }
  .area { font-family: Inter, "Open Sans", sans-serif; font-weight: 550; }
  .road { font-family: Inter, "Open Sans", sans-serif; fill: #493512; stroke: none; }
  .store { font-family: Inter, "Noto Sans", sans-serif; fill: #fff; font-weight: 600; stroke: #000; stroke-width: 4; }
  .pin { fill: #fff; }
  .pin-shadow { fill: #2c2e36; }
  .mark { fill: none; stroke: #000; stroke-width: 2.4; }
  .wrench { fill: #000; }

  .back {
    position: absolute;
    left: 32px;
    top: 34px;
    width: 48px;
    height: 48px;
    border-radius: 8px;
    background: #6b53e0;
  }
  .back svg { display: block; width: 48px; height: 48px; }
  .back path { fill: none; stroke: #fff; stroke-width: 2; stroke-linecap: round; stroke-linejoin: round; }

  .sheet {
    position: relative;
    flex: 1;
    display: flex;
    flex-direction: column;
    box-sizing: border-box;
    padding: 32px 48px 0;
    border-bottom: 2px solid #17151a;
    border-radius: 48px 48px 0 0;
    background: #1a1a1c;
    font-size: 32px;
    line-height: 48px;
    -webkit-text-stroke: 0.4px currentColor;
  }
  h1 {
    margin: 0 0 16px;
    font-size: 36px;
    line-height: 56px;
    font-weight: 600;
    text-align: center;
  }
  .tabs { display: grid; grid-template-columns: repeat(3, 1fr); gap: 32px; }
  .tab {
    height: 84px;
    box-sizing: border-box;
    border: 2px solid #6b53e0;
    border-radius: 8px;
    background: transparent;
  }
  .tab.active { background: #6b53e0; }
  .list {
    display: flex;
    height: 520px;
    margin-top: 32px;
    border-radius: 24px;
    background: #252429;
  }
  .stops {
    flex: 1;
    box-sizing: border-box;
    margin: 0;
    padding: 8px 20px 0 32px;
    list-style: none;
  }
  li { display: flex; align-items: center; gap: 16px; height: 64px; }
  .fare { margin-left: auto; }
  .track { width: 10px; background: #252429; }
  .thumb { height: 245px; border-radius: 5px; background: #6b53e0; }
  .confirm {
    width: 1764px;
    height: 80px;
    margin: 48px auto 0;
    border-radius: 24px;
    background: #6b53e0;
  }
</style>
